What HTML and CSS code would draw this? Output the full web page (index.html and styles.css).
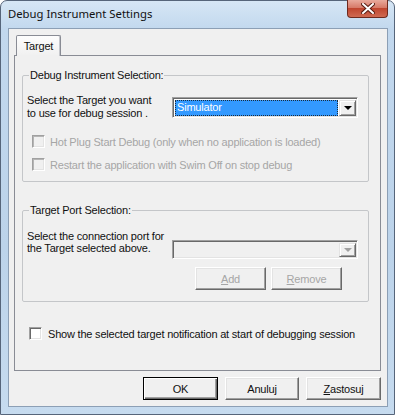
FILE: index.html
```html
<!DOCTYPE html>
<html>
  <head>
    <meta charset="utf-8">
    <title>Debug Instrument Settings</title>
    <link rel="stylesheet" href="styles.css">
  </head>
  <body>
    <div class="window">

      <!-- title bar -->
      <div class="titlebar">
        <span class="title">Debug Instrument Settings</span>
        <span class="close">
          <svg width="14" height="11" viewBox="0 0 14 11">
            <path d="M2 1 L12 10 M12 1 L2 10" stroke="#5a1d12" stroke-width="4" stroke-linecap="square"/>
            <path d="M2 1 L12 10 M12 1 L2 10" stroke="#fff" stroke-width="2" stroke-linecap="square"/>
          </svg>
        </span>
      </div>

      <div class="client">
        <div class="tabstrip">
          <div class="tab">Target</div>
        </div>

        <div class="page">

          <fieldset class="group">
            <legend>Debug Instrument Selection:</legend>
            <div class="select-row">
              <div class="select-label">Select the Target you want<br>to use for debug session .</div>
              <div class="combo">
                <div class="combo-value"><span class="selected">Simulator</span></div>
                <div class="drop"><span class="arrow"></span></div>
              </div>
            </div>
            <div class="check-row first disabled">
              <span class="box"></span>
              <span>Hot Plug Start Debug (only when no application is loaded)</span>
            </div>
            <div class="check-row second disabled">
              <span class="box"></span>
              <span>Restart the application with Swim Off on stop debug</span>
            </div>
          </fieldset>

          <fieldset class="group port">
            <legend>Target Port Selection:</legend>
            <div class="select-row">
              <div class="select-label port-label">Select the connection port for<br>the Target selected above.</div>
              <div class="combo disabled">
                <div class="combo-value"></div>
                <div class="drop"><span class="arrow"></span></div>
              </div>
            </div>
            <div class="port-buttons">
              <span class="btn small disabled"><u>A</u>dd</span>
              <span class="btn small disabled"><u>R</u>emove</span>
            </div>
          </fieldset>

          <div class="check-row notify">
            <span class="box"></span>
            <span>Show the selected target notification at start of debugging session</span>
          </div>

        </div>

        <!-- dialog buttons -->
        <div class="dialog-buttons">
          <span class="btn default">OK</span>
          <span class="btn anuluj">Anuluj</span>
          <span class="btn"><u>Z</u>astosuj</span>
        </div>
      </div>

    </div>
  </body>
</html>
```

FILE: styles.css
```css
body {
    margin: 0;
    font-family: "Liberation Sans", Arial, sans-serif;
    font-size: 11px;
    letter-spacing: -0.2px;
    color: #111;
    background: #fff;
    }

.window {
    width: 395px;
    height: 415px;
    box-sizing: border-box;
    border: 1px solid #56657a;
    border-radius: 7px 7px 0 0;
    background: linear-gradient(to bottom, #d6e6f5 0, #c2d8ee 28px, #bcd3ea 60%, #c6dbef 100%);
    display: flex;
    flex-direction: column;
    }

/* ---------- title bar ---------- */
.titlebar {
    height: 27px;
    display: flex;
    justify-content: space-between;
    }

.title {
    font-family: "Noto Sans", "Open Sans", sans-serif;
    font-size: 11.3px;
    letter-spacing: 0;
    padding-left: 7px;
    line-height: 25px;
    }

.close {
    width: 41px;
    height: 18px;
    box-sizing: border-box;
    margin-top: -1px;
    margin-right: 6px;
    border: 1px solid #6e2a1e;
    border-top: none;
    border-radius: 0 0 4px 4px;
    background: linear-gradient(to bottom, #e9aa9c 0, #d77a68 45%, #c0462f 50%, #cf6a52 100%);
    display: flex;
    align-items: center;
    justify-content: center;
    }

/* ---------- client area ---------- */
.client {
    flex: 1;
    margin: 0 6px 7px 7px;
    background: #f0f0f0;
    border: 1px solid #8c9fb5;
    padding: 6px 6px 0 5px;
    display: flex;
    flex-direction: column;
    }

.tabstrip {
    display: flex;
    padding-left: 2px;
    }

.tab {
    width: 45px;
    height: 21px;
    box-sizing: border-box;
    border: 1px solid #898c95;
    border-bottom: none;
    border-radius: 2px 2px 0 0;
    margin-bottom: -1px;
    position: relative;
    z-index: 1;
    background: linear-gradient(to bottom, #fdfdfd, #f0f0f0);
    box-shadow: inset -1px 0 #c4c6cb;
    text-align: center;
    line-height: 20px;
    }

.page {
    height: 316px;
    box-sizing: border-box;
    border: 1px solid #898c95;
    padding: 13px 11px 0 7px;
    background: #f0f0f0;
    }

/* ---------- group boxes ---------- */
.group {
    margin: 0;
    border: 1px solid #c4c6c9;
    border-radius: 2px;
    padding: 12px 10px 10px 4px;
    }

.group legend {
    margin-left: 2px;
    padding: 0 1px;
    line-height: 13px;
    }

.group.port {
    margin-top: 22px;
    padding-top: 13px;
    padding-bottom: 11px;
    }

.select-row {
    display: flex;
    align-items: flex-start;
    }

.select-label {
    width: 145px;
    line-height: 13px;
    }

.port-label {
    line-height: 12px;
    }

/* combo box, classic sunken */
.combo {
    width: 186px;
    height: 21px;
    margin-top: 3px;
    box-sizing: border-box;
    border: 1px solid;
    border-color: #a0a0a0 #fff #fff #a0a0a0;
    box-shadow: inset 1px 1px #696969, inset -1px -1px #e3e3e3;
    background: #fff;
    padding: 2px 1px 1px 2px;
    display: flex;
    }

.combo.disabled {
    height: 19px;
    margin-top: 10px;
    background: #f0f0f0;
    }

.combo-value {
    flex: 1;
    }

.selected {
    display: block;
    height: 100%;
    box-sizing: border-box;
    background: #3399ff;
    color: #fff;
    outline: 1px dotted #1a2b3c;
    outline-offset: -1px;
    padding-left: 2px;
    margin-right: 1px;
    line-height: 15px;
    }

.drop {
    width: 17px;
    box-sizing: border-box;
    border: 1px solid;
    border-color: #e3e3e3 #696969 #696969 #e3e3e3;
    box-shadow: inset 1px 1px #fff, inset -1px -1px #a0a0a0;
    background: #f0f0f0;
    display: flex;
    align-items: center;
    justify-content: center;
    }

.arrow {
    width: 0;
    height: 0;
    border-left: 4px solid transparent;
    border-right: 4px solid transparent;
    border-top: 4px solid #000;
    }

.combo.disabled .arrow {
    border-top-color: #a0a0a0;
    }

/* check boxes */
.check-row {
    display: flex;
    align-items: center;
    height: 13px;
    padding-left: 5px;
    }

.check-row.first {
    margin-top: 15px;
    }

.check-row.second {
    margin-top: 10px;
    }

.check-row .box {
    width: 13px;
    height: 13px;
    box-sizing: border-box;
    border: 1px solid;
    border-color: #a0a0a0 #fff #fff #a0a0a0;
    box-shadow: inset 1px 1px #696969, inset -1px -1px #e3e3e3;
    background: #fff;
    margin-right: 5px;
    }

.check-row.disabled {
    color: #a6a6a6;
    }

.check-row.disabled .box {
    background: #f0f0f0;
    box-shadow: inset 1px 1px #b5b5b5, inset -1px -1px #e3e3e3;
    }

.check-row.notify {
    margin-top: 25px;
    padding-left: 7px;
    }

.check-row.notify .box {
    margin-right: 6px;
    }

/* ---------- buttons ---------- */
.btn {
    display: flex;
    align-items: center;
    justify-content: center;
    width: 75px;
    height: 23px;
    box-sizing: border-box;
    border: 1px solid;
    border-color: #fff #696969 #696969 #fff;
    box-shadow: inset -1px -1px #a0a0a0, inset 1px 1px #e3e3e3;
    background: #f0f0f0;
    }

.btn.default {
    border-color: #000;
    box-shadow: inset 1px 1px #fff, inset -1px -1px #696969, inset -2px -2px #a0a0a0;
    }

.btn.anuluj {
    width: 74px;
    }

.btn.small {
    width: 71px;
    }

.btn.disabled {
    color: #a6a6a6;
    }

.port-buttons {
    display: flex;
    justify-content: flex-end;
    gap: 5px;
    margin-top: 8px;
    margin-right: 16px;
    }

.dialog-buttons {
    display: flex;
    justify-content: flex-end;
    gap: 7px;
    margin-top: 6px;
    }
```
